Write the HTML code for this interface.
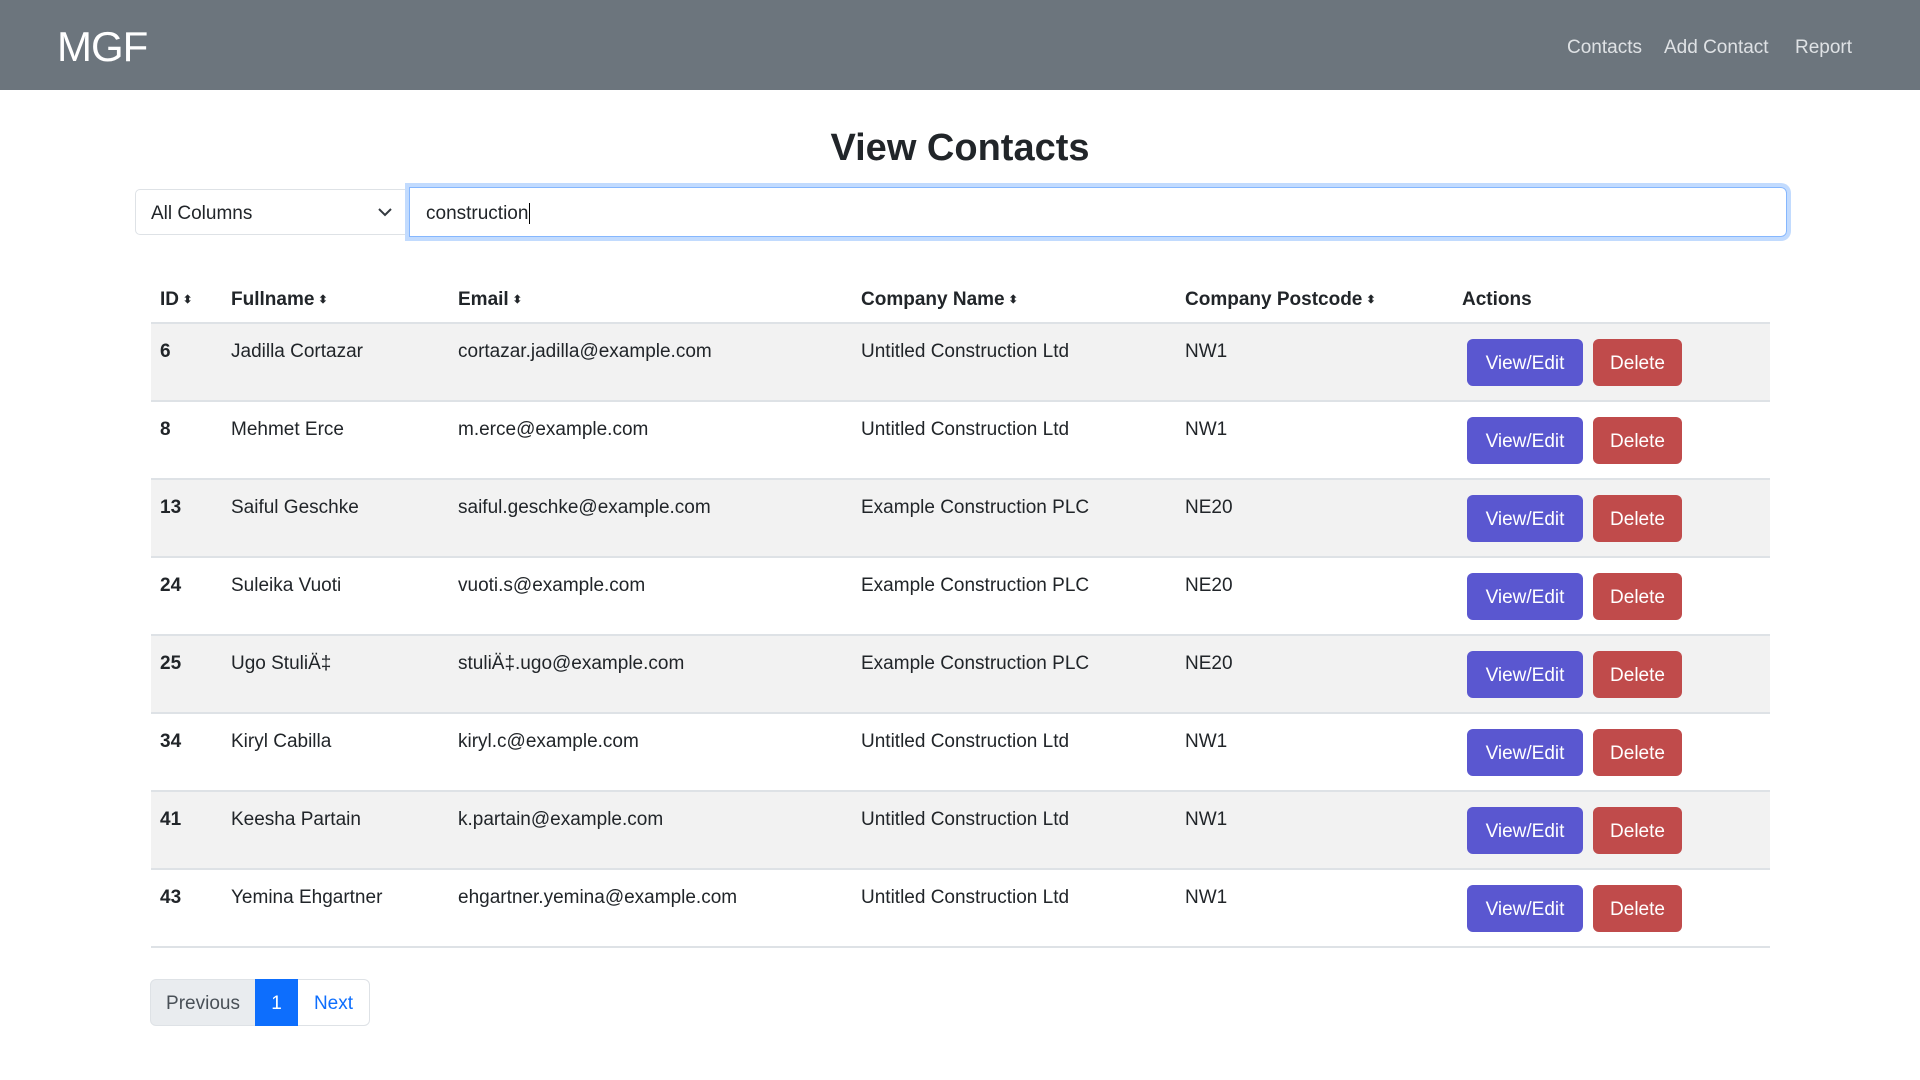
<!DOCTYPE html>
<html><head><meta charset="utf-8"><style>
*{box-sizing:border-box;margin:0;padding:0}
body{width:1920px;height:1080px;background:#fff;font-family:"Liberation Sans",sans-serif;color:#212529;position:relative;overflow:hidden}
.hdr{position:absolute;left:0;top:0;width:1920px;height:90px;background:#6c757d}
.logo{position:absolute;left:57px;top:23px;font-size:42px;color:#fff;letter-spacing:-1px}
.nav{position:absolute;top:37px;font-size:19px;color:#dfe2e5}
h1{position:absolute;left:0;width:1920px;top:127px;text-align:center;font-size:38px;font-weight:bold}
.sel{position:absolute;left:135px;top:189px;width:272px;height:46px;border:1px solid #dee2e6;border-radius:5px 0 0 5px;font-size:19px;padding:13px 15px}
.sel svg{position:absolute;right:14px;top:17px}
.inp{position:absolute;left:409px;top:187px;width:1378px;height:50px;border:1px solid #86b7fe;border-radius:0 6px 6px 0;box-shadow:0 0 0 4px #c2dbfe;font-size:19px;padding:15px 16px}
.inp span{border-right:1.5px solid #000;padding-right:1px}
.th{position:absolute;top:289px;font-size:19px;font-weight:bold}
.ar{display:inline-block;font-size:11px;vertical-align:2px;margin-left:4px}
.row{position:absolute;left:151px;width:1619px;height:78px;border-top:2px solid #dee2e6}
.row.s{background:#f2f2f2}
.c{position:absolute;top:17px;font-size:19px}
.b{position:absolute;top:15px;height:47px;border-radius:6px;color:#fff;font-size:19px;text-align:center;line-height:50px}
.pe{background:#5a57d0;left:1316px;width:116px}
.de{background:#c04b4b;left:1442px;width:89px}
.pg{position:absolute;top:979px;height:47px;font-size:19px;line-height:47px;text-align:center}
</style></head><body>
<div class="hdr"><div class="logo">MGF</div>
<div class="nav" style="left:1567px">Contacts</div>
<div class="nav" style="left:1664px">Add Contact</div>
<div class="nav" style="left:1795px">Report</div></div>
<h1>View Contacts</h1>
<div class="sel">All Columns<svg width="14" height="10" viewBox="0 0 14 10"><path d="M1 2l6 6 6-6" fill="none" stroke="#343a40" stroke-width="2"/></svg></div>
<div class="inp"><span>construction</span></div>
<div class="th" style="left:160px">ID<span class="ar">⬍</span></div>
<div class="th" style="left:231px">Fullname<span class="ar">⬍</span></div>
<div class="th" style="left:458px">Email<span class="ar">⬍</span></div>
<div class="th" style="left:861px">Company Name<span class="ar">⬍</span></div>
<div class="th" style="left:1185px">Company Postcode<span class="ar">⬍</span></div>
<div class="th" style="left:1462px">Actions</div>

<div class="row s" style="top:322px"><div class="c" style="left:9px;font-weight:bold">6</div><div class="c" style="left:80px">Jadilla Cortazar</div><div class="c" style="left:307px">cortazar.jadilla@example.com</div><div class="c" style="left:710px">Untitled Construction Ltd</div><div class="c" style="left:1034px">NW1</div><div class="b pe">View/Edit</div><div class="b de">Delete</div></div>
<div class="row" style="top:400px"><div class="c" style="left:9px;font-weight:bold">8</div><div class="c" style="left:80px">Mehmet Erce</div><div class="c" style="left:307px">m.erce@example.com</div><div class="c" style="left:710px">Untitled Construction Ltd</div><div class="c" style="left:1034px">NW1</div><div class="b pe">View/Edit</div><div class="b de">Delete</div></div>
<div class="row s" style="top:478px"><div class="c" style="left:9px;font-weight:bold">13</div><div class="c" style="left:80px">Saiful Geschke</div><div class="c" style="left:307px">saiful.geschke@example.com</div><div class="c" style="left:710px">Example Construction PLC</div><div class="c" style="left:1034px">NE20</div><div class="b pe">View/Edit</div><div class="b de">Delete</div></div>
<div class="row" style="top:556px"><div class="c" style="left:9px;font-weight:bold">24</div><div class="c" style="left:80px">Suleika Vuoti</div><div class="c" style="left:307px">vuoti.s@example.com</div><div class="c" style="left:710px">Example Construction PLC</div><div class="c" style="left:1034px">NE20</div><div class="b pe">View/Edit</div><div class="b de">Delete</div></div>
<div class="row s" style="top:634px"><div class="c" style="left:9px;font-weight:bold">25</div><div class="c" style="left:80px">Ugo StuliÄ‡</div><div class="c" style="left:307px">stuliÄ‡.ugo@example.com</div><div class="c" style="left:710px">Example Construction PLC</div><div class="c" style="left:1034px">NE20</div><div class="b pe">View/Edit</div><div class="b de">Delete</div></div>
<div class="row" style="top:712px"><div class="c" style="left:9px;font-weight:bold">34</div><div class="c" style="left:80px">Kiryl Cabilla</div><div class="c" style="left:307px">kiryl.c@example.com</div><div class="c" style="left:710px">Untitled Construction Ltd</div><div class="c" style="left:1034px">NW1</div><div class="b pe">View/Edit</div><div class="b de">Delete</div></div>
<div class="row s" style="top:790px"><div class="c" style="left:9px;font-weight:bold">41</div><div class="c" style="left:80px">Keesha Partain</div><div class="c" style="left:307px">k.partain@example.com</div><div class="c" style="left:710px">Untitled Construction Ltd</div><div class="c" style="left:1034px">NW1</div><div class="b pe">View/Edit</div><div class="b de">Delete</div></div>
<div class="row" style="top:868px;height:80px;border-bottom:2px solid #dee2e6"><div class="c" style="left:9px;font-weight:bold">43</div><div class="c" style="left:80px">Yemina Ehgartner</div><div class="c" style="left:307px">ehgartner.yemina@example.com</div><div class="c" style="left:710px">Untitled Construction Ltd</div><div class="c" style="left:1034px">NW1</div><div class="b pe">View/Edit</div><div class="b de">Delete</div></div>

<div class="pg" style="left:150px;width:106px;background:#e9ecef;border:1px solid #dee2e6;border-radius:6px 0 0 6px;color:#495057">Previous</div>
<div class="pg" style="left:255px;width:43px;background:#0d6efd;color:#fff;line-height:49px">1</div>
<div class="pg" style="left:298px;width:72px;border:1px solid #dee2e6;border-left:none;border-radius:0 6px 6px 0;color:#0d6efd">Next</div>
</body></html>
